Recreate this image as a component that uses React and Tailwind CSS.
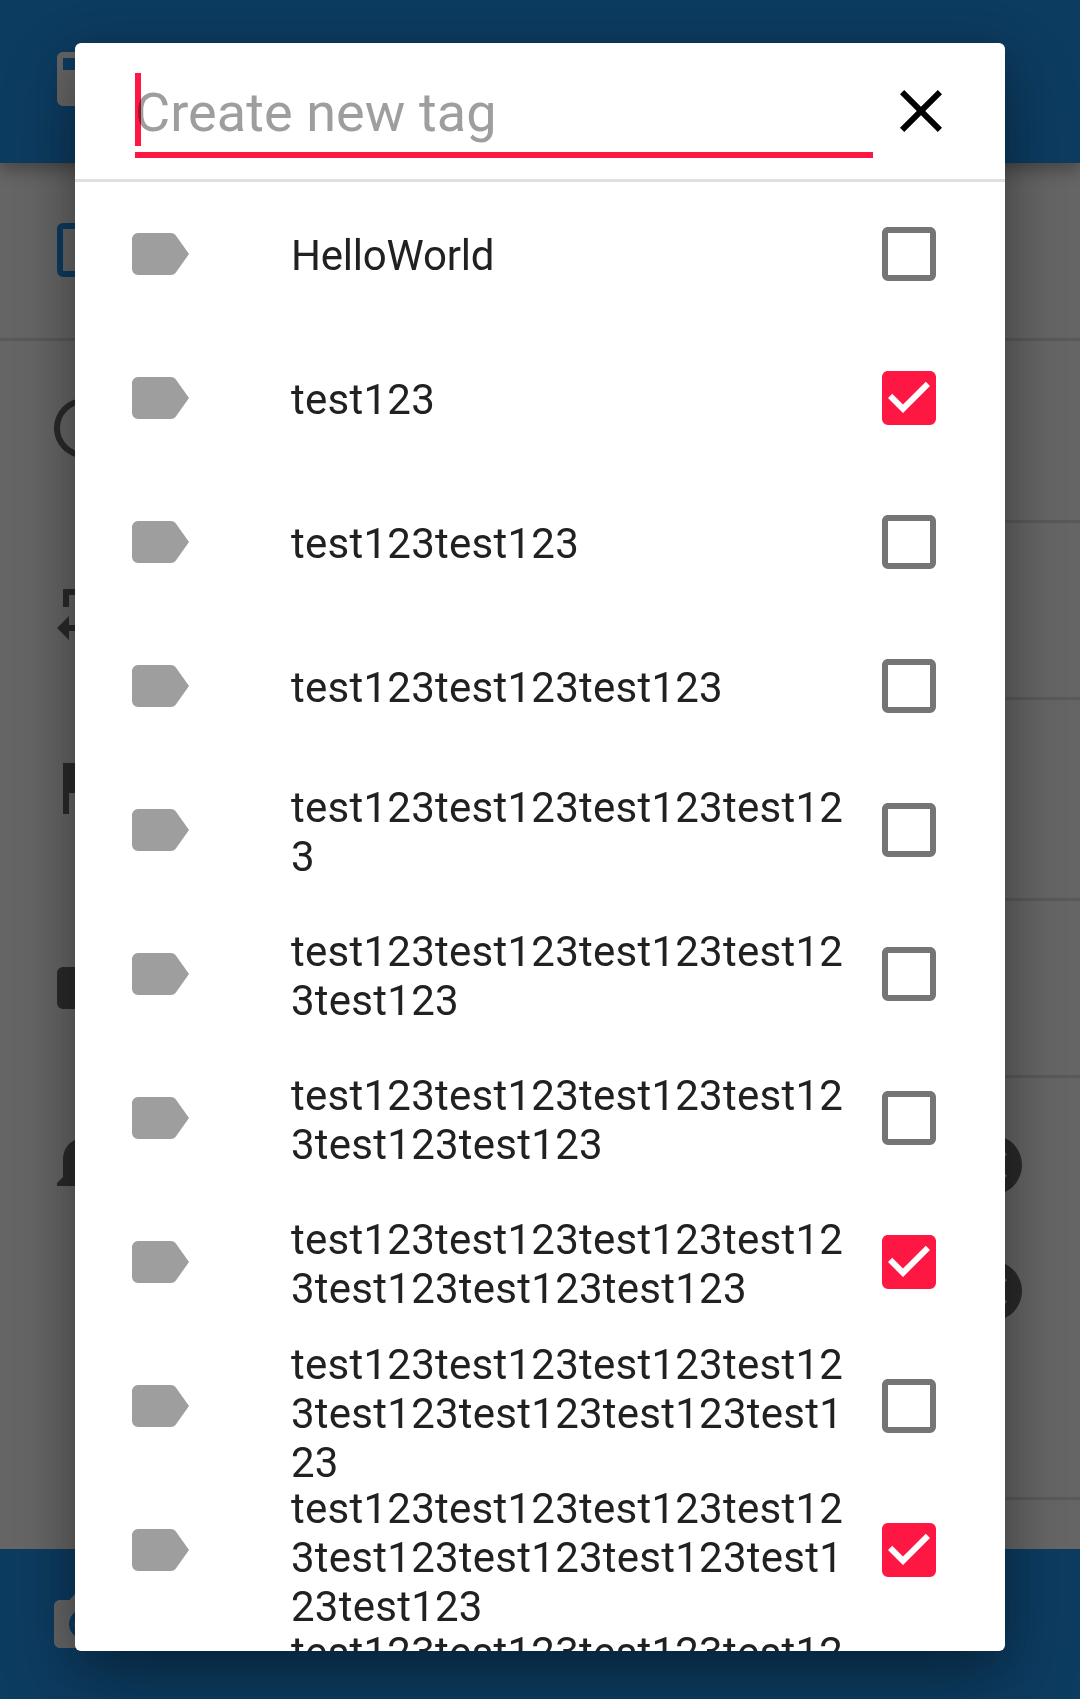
const TAG = 'test123'

const tags = [
  { name: 'HelloWorld', checked: false },
  { name: TAG, checked: true },
  { name: TAG.repeat(2), checked: false },
  { name: TAG.repeat(3), checked: false },
  { name: TAG.repeat(4), checked: false },
  { name: TAG.repeat(5), checked: false },
  { name: TAG.repeat(6), checked: false },
  { name: TAG.repeat(7), checked: true },
  { name: TAG.repeat(8), checked: false },
  { name: TAG.repeat(9), checked: true },
  { name: TAG.repeat(10), checked: false },
]

const paths = {
  label:
    'M17.63,5.84C17.27,5.33 16.67,5 16,5H5A2,2 0 0,0 3,7V17A2,2 0 0,0 5,19H16C16.67,19 17.27,18.66 17.63,18.15L22,12L17.63,5.84Z',
  close:
    'M19,6.41L17.59,5L12,10.59L6.41,5L5,6.41L10.59,12L5,17.59L6.41,19L12,13.41L17.59,19L19,17.59L13.41,12L19,6.41Z',
  boxEmpty:
    'M19,3H5C3.89,3 3,3.89 3,5V19A2,2 0 0,0 5,21H19A2,2 0 0,0 21,19V5C21,3.89 20.1,3 19,3M19,5V19H5V5H19Z',
  boxChecked:
    'M10,17L5,12L6.41,10.58L10,14.17L17.59,6.58L19,8M19,3H5C3.89,3 3,3.89 3,5V19A2,2 0 0,0 5,21H19A2,2 0 0,0 21,19V5C21,3.89 20.1,3 19,3Z',
  save: 'M15,9H5V5H15M12,19A3,3 0 0,1 9,16A3,3 0 0,1 12,13A3,3 0 0,1 15,16A3,3 0 0,1 12,19M17,3H5C3.89,3 3,3.9 3,5V19A2,2 0 0,0 5,21H19A2,2 0 0,0 21,19V7L17,3Z',
  clock:
    'M12,20A8,8 0 0,0 20,12A8,8 0 0,0 12,4A8,8 0 0,0 4,12A8,8 0 0,0 12,20M12,2A10,10 0 0,1 22,12A10,10 0 0,1 12,22C6.47,22 2,17.5 2,12A10,10 0 0,1 12,2M12.5,7V12.25L17,14.92L16.25,16.15L11,13V7H12.5Z',
  repeat: 'M17,17H7V14L3,18L7,22V19H19V13H17M7,7H17V10L21,6L17,2V5H5V11H7V7Z',
  flag: 'M14.4,6L14,4H5V21H7V14H12.6L13,16H20V6H14.4Z',
  bell: 'M21,19V20H3V19L5,17V11C5,7.9 7.03,5.17 10,4.29V4A2,2 0 0,1 12,2A2,2 0 0,1 14,4V4.29C16.97,5.17 19,7.9 19,11V17L21,19Z',
  closeCircle:
    'M12,2C17.53,2 22,6.47 22,12C22,17.53 17.53,22 12,22C6.47,22 2,17.53 2,12C2,6.47 6.47,2 12,2M15.59,7L12,10.59L8.41,7L7,8.41L10.59,12L7,15.59L8.41,17L12,13.41L15.59,17L17,15.59L13.41,12L17,8.41L15.59,7Z',
  camera:
    'M12,8.8A3.2,3.2 0 0,1 15.2,12A3.2,3.2 0 0,1 12,15.2A3.2,3.2 0 0,1 8.8,12A3.2,3.2 0 0,1 12,8.8M9,2L7.17,4H4C2.9,4 2,4.9 2,6V18C2,19.1 2.9,20 4,20H20C21.1,20 22,19.1 22,18V6C22,4.9 21.1,4 20,4H16.83L15,2H9M12,17A5,5 0 0,1 7,12A5,5 0 0,1 12,7A5,5 0 0,1 17,12A5,5 0 0,1 12,17Z',
}

function Icon({ name, className = '' }) {
  return (
    <svg viewBox="0 0 24 24" className={`size-[72px] shrink-0 ${className}`} fill="currentColor" fillRule="evenodd">
      <path d={paths[name]} />
    </svg>
  )
}

function EditorPage() {
  return (
    <div className="flex h-full flex-col bg-white text-[#6b6b6b]">
      <header className="relative h-[163px] shrink-0 bg-[#2196f3] px-12 pt-[43px] text-white shadow-[0_6px_18px_rgba(0,0,0,0.35)]">
        <Icon name="save" />
      </header>
      <main className="flex-1">
        <div className="h-[178px] border-b-3 border-[#e0e0e0] px-12 pt-[51px] text-[#2196f3]">
          <Icon name="boxEmpty" />
        </div>
        <div className="flex h-[182px] pl-12">
          <Icon name="clock" className="mt-[51px]" />
          <div className="ml-24 flex-1 border-b-3 border-[#e0e0e0]" />
        </div>
        <div className="flex h-[177px] pl-12">
          <Icon name="repeat" className="mt-[51px]" />
          <div className="ml-24 flex-1 border-b-3 border-[#e0e0e0]" />
        </div>
        <div className="flex h-[201px] pl-12">
          <Icon name="flag" className="mt-[51px]" />
          <div className="ml-24 flex-1 border-b-3 border-[#e0e0e0]" />
        </div>
        <div className="flex h-[177px] pl-12">
          <Icon name="label" className="mt-[51px]" />
          <div className="ml-24 flex-1 border-b-3 border-[#e0e0e0]" />
        </div>
        <div className="flex h-[422px] pl-12">
          <Icon name="bell" className="mt-[48px]" />
          <div className="ml-24 flex flex-1 flex-col items-end gap-[54px] border-b-3 border-[#e0e0e0] pt-[51px] pr-[52px]">
            <Icon name="closeCircle" />
            <Icon name="closeCircle" />
          </div>
        </div>
      </main>
      <footer className="h-[150px] shrink-0 bg-[#2196f3] px-12 pt-[39px] text-white">
        <Icon name="camera" />
      </footer>
    </div>
  )
}

function TagRow({ tag }) {
  const tracking = /\d/.test(tag.name) ? 'tracking-[0.25px]' : 'tracking-[-0.2px]'
  return (
    <li className="flex h-36 shrink-0 [align-items:safe_center] pr-[60px] pl-12">
      <Icon name="label" className="text-[#9e9e9e]" />
      <span className={`ml-24 w-[564px] pt-[5.5px] pb-[2.5px] text-[42px] leading-[49px] break-all text-[#212121] ${tracking}`}>
        {tag.name}
      </span>
      <Icon
        name={tag.checked ? 'boxChecked' : 'boxEmpty'}
        className={tag.checked ? 'ml-[18px] text-[#ff1744]' : 'ml-[18px] text-[#757575]'}
      />
    </li>
  )
}

function TagDialog() {
  return (
    <div className="flex h-[1608px] w-[930px] flex-col overflow-hidden rounded-[6px] bg-white shadow-[0_30px_72px_rgba(0,0,0,0.3),0_6px_40px_rgba(0,0,0,0.18)]">
      <div className="flex h-[139px] shrink-0 border-b-3 border-[#e0e0e0] pl-[60px]">
        <div className="relative mt-[30px] h-[85px] w-[738px] border-b-6 border-[#ff1744]">
          <span className="absolute top-0 left-0 h-[73px] w-1.5 bg-[#ff1744]" />
          <span className="relative block pt-2 text-[54px] leading-[63px] tracking-[0.08px] text-[#9e9e9e] mix-blend-multiply">
            Create new tag
          </span>
        </div>
        <Icon name="close" className="mt-8 ml-3 text-black" />
      </div>
      <ul className="flex flex-col">
        {tags.map((tag) => (
          <TagRow key={tag.name} tag={tag} />
        ))}
      </ul>
    </div>
  )
}

export default function App() {
  return (
    <div className="relative h-[1699px] w-[1080px] overflow-hidden font-['Roboto',sans-serif]">
      <EditorPage />
      <div className="absolute inset-0 flex items-start justify-center bg-black/60 pt-[43px]">
        <TagDialog />
      </div>
    </div>
  )
}
